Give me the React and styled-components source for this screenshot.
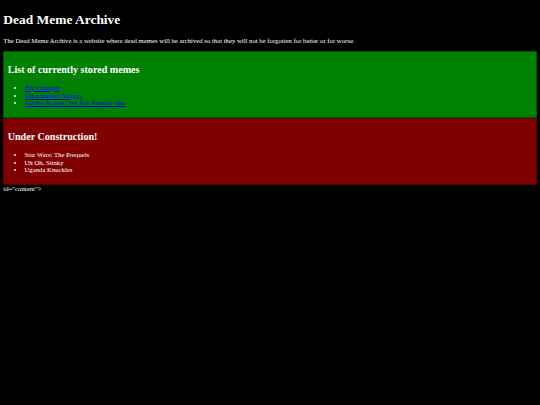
import React from 'react';
import styled, { createGlobalStyle } from 'styled-components';

// the page was captured at ~1280px wide and shrunk down, so every size is scaled
const S = 0.42;
const px = (n) => `${(n * S).toFixed(2)}px`;

const GlobalStyle = createGlobalStyle`
  html, body {
    background: #000;
  }
  body {
    margin: ${px(8)};
    color: #fff;
    font-family: "Liberation Serif", "Times New Roman", serif;
    font-size: ${px(16)};
    /* fixed ratio so tiny fonts don't round their line boxes down */
    line-height: 1.15;
  }
`;

const Title = styled.h1`
  font-size: ${px(32)};
  font-weight: bold;
  margin: 0.67em 0;
`;

const Intro = styled.p`
  margin: 1em 0;
`;

const Panel = styled.div`
  background-color: ${(props) => props.$bg};
  border: ${px(2)} dotted rgba(0, 0, 0, 0.6);
  padding: ${px(8)};
`;

const PanelTitle = styled.h2`
  font-size: ${px(24)};
  font-weight: bold;
  margin: 0.83em 0;
`;

const List = styled.ul`
  margin: 1em 0;
  padding-left: ${px(40)};
  list-style: disc;
`;

const Item = styled.li``;

const MemeLink = styled.a`
  color: #0000ee;
  text-decoration: underline;
`;

const stored = ['Big Chungus', 'Ultra Instinct Shaggy', 'Robbie Rotten / We Are Number One'];
const building = ['Star Wars: The Prequels', 'Uh Oh, Stinky', 'Uganda Knuckles'];

const App = () => {
  return (
    <>
      <GlobalStyle />
      <Title>Dead Meme Archive</Title>
      <Intro>
        The Dead Meme Archive is a website where dead memes will be archived so that they will not be
        forgotten for better or for worse.
      </Intro>

      <Panel $bg="#008000">
        <PanelTitle>List of currently stored memes</PanelTitle>
        <List>
          {stored.map((name) => (
            <Item key={name}>
              <MemeLink href="#">{name}</MemeLink>
            </Item>
          ))}
        </List>
      </Panel>

      <Panel $bg="#800000">
        <PanelTitle>Under Construction!</PanelTitle>
        <List>
          {building.map((name) => (
            <Item key={name}>{name}</Item>
          ))}
        </List>
      </Panel>
      id="content"&gt;
    </>
  );
};

export default App;
